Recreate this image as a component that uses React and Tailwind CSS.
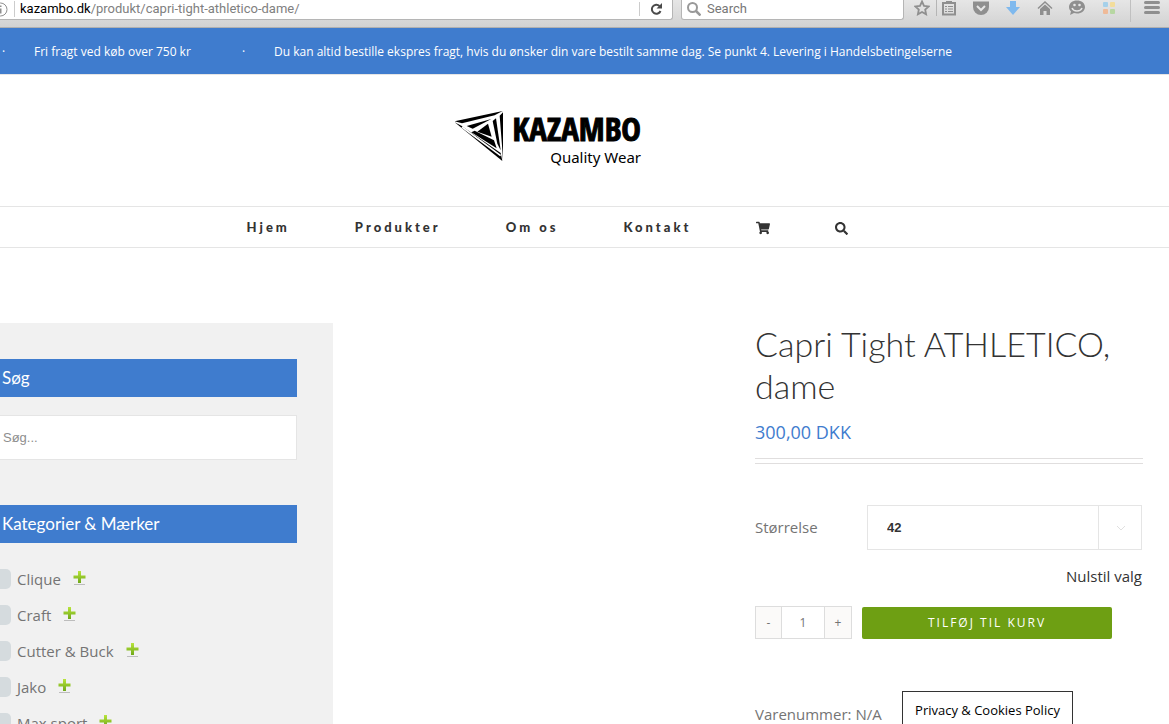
import React, { useState } from 'react';
import { FaShoppingCart, FaSearch } from 'react-icons/fa';

const categories = ['Clique', 'Craft', 'Cutter & Buck', 'Jako', 'Max sport'];
const navLinks = ['Hjem', 'Produkter', 'Om os', 'Kontakt'];

const App = () => {
  const [quantity, setQuantity] = useState(1);
  const [size, setSize] = useState('42');

  return (
    <div className="h-screen overflow-hidden bg-white font-['Open_Sans',sans-serif] text-[#747474]">
      <BrowserBar />

      {/* Shipping notice */}
      <div className="flex h-[47px] items-center overflow-hidden whitespace-nowrap border-b border-[#e5e5e5] bg-[#3f7cce] pl-[2px] pt-[2px] text-[12px] text-white">
        <span className="w-8">·</span>
        <span className="w-[208px]">Fri fragt ved køb over 750 kr</span>
        <span className="w-8">·</span>
        <span>Du kan altid bestille ekspres fragt, hvis du ønsker din vare bestilt samme dag. Se punkt 4. Levering i Handelsbetingelserne</span>
      </div>

      <header>
        <div className="flex h-[131px] justify-center pr-[74px] pt-9">
          <Logo />
        </div>
        <nav className="flex h-[42px] items-center justify-center gap-[65px] border-y border-[#e5e5e5] pr-[74px] pt-[2px] font-['Lato',sans-serif] text-[13px] font-black tracking-[3px] text-[#333333]">
          {navLinks.map(link => (
            <a key={link} href="#">{link}</a>
          ))}
          <a href="#" aria-label="Kurv"><FaShoppingCart className="size-[14px]" /></a>
          <a href="#" aria-label="Søg"><FaSearch className="size-[13px]" /></a>
        </nav>
      </header>

      <main className="grid grid-cols-[333px_1fr_388px] pr-[26px] pt-[75px]">
        <aside className="bg-[#f1f1f1] pb-9 pr-9 pt-9">
          <SidebarTitle>Søg</SidebarTitle>
          <input
            type="text"
            aria-label="Søg"
            placeholder="Søg..."
            className="mb-[45px] mt-[18px] block h-[45px] w-full border border-l-0 border-[#e5e5e5] bg-white pl-[3px] font-['Liberation_Sans',sans-serif] text-[13px] placeholder:text-[#8e8e8e] focus:outline-none"
          />
          <SidebarTitle>Kategorier &amp; Mærker</SidebarTitle>
          <ul className="mt-[18px]">
            {categories.map(name => (
              <CategoryRow key={name} name={name} />
            ))}
          </ul>
        </aside>

        {/* Product */}
        <section className="col-start-3">
          <h1 className="font-['Lato',sans-serif] text-[34px] font-light leading-[42px] text-[#333333]">
            Capri Tight ATHLETICO, dame
          </h1>
          <p className="mt-[11px] text-[18px] leading-7 text-[#3f7cce]">300,00 DKK</p>
          <div className="mt-3 h-[6px] border-y border-[#e0dede]" />

          <div className="mt-[41px] flex items-center pr-px">
            <label htmlFor="size" className="w-28 text-[15px]">Størrelse</label>
            <div className="relative flex-1">
              <select
                id="size"
                value={size}
                onChange={(e) => setSize(e.target.value)}
                className="block h-[45px] w-full appearance-none border border-[#e5e5e5] bg-white pl-[19px] font-['Liberation_Sans',sans-serif] text-[13px] font-bold text-[#333333] focus:outline-none"
              >
                <option>42</option>
                <option>44</option>
                <option>46</option>
              </select>
              <span className="pointer-events-none absolute inset-y-0 right-0 flex w-11 items-center justify-center border-l border-[#e5e5e5]">
                <svg width="10" height="6" viewBox="0 0 10 6" fill="none" stroke="#e0e0e0">
                  <path d="M1 1l4 4 4-4" />
                </svg>
              </span>
            </div>
          </div>
          <div className="mt-[14px] pr-px text-right text-[15px] leading-6 text-[#333333]">
            <a href="#">Nulstil valg</a>
          </div>

          <div className="mt-[18px] flex items-center gap-[10px]">
            <div className="flex h-[33px] border border-[#dddddd] text-[12px]">
              <button aria-label="Færre" onClick={() => setQuantity(Math.max(1, quantity - 1))} className="w-[25px] bg-[#fbfaf9]">-</button>
              <input
                type="text"
                aria-label="Antal"
                value={quantity}
                onChange={(e) => setQuantity(Number(e.target.value) || 1)}
                className="w-11 border-x border-[#dddddd] text-center focus:outline-none"
              />
              <button aria-label="Flere" onClick={() => setQuantity(quantity + 1)} className="w-[26px] bg-[#fbfaf9]">+</button>
            </div>
            <button className="h-8 w-[250px] rounded-[2px] bg-[#6e9f13] text-[12px] tracking-[2px] text-white">
              TILFØJ TIL KURV
            </button>
          </div>

          <p className="mt-[63px] text-[15px] leading-6">Varenummer: N/A</p>
        </section>
      </main>

      <a href="#" className="fixed bottom-0 right-24 flex h-[33px] w-[171px] items-center justify-center whitespace-nowrap border border-b-0 border-[#333333] bg-white pt-[5px] text-[13px] text-black">
        Privacy &amp; Cookies Policy
      </a>
    </div>
  );
};

const SidebarTitle = ({ children }) => (
  <h2 className="flex h-[38px] items-center bg-[#3f7cce] pl-[2px] font-['Lato',sans-serif] text-[17px] text-white">{children}</h2>
);

const CategoryRow = ({ name }) => (
  <li className="flex h-9 items-center">
    <label className="flex items-center gap-[6px] text-[15px]">
      <input type="checkbox" className="-ml-[9px] size-5 appearance-none rounded-[5px] bg-[#d5dbde] checked:bg-[#3f7cce]" />
      {name}
    </label>
    <button aria-label={`Vis ${name}`} className="ml-3 pb-1">
      <svg width="13" height="15" viewBox="0 0 13 15">
        <defs>
          <linearGradient id="plus" x1="0" y1="0" x2="0" y2="1">
            <stop offset="0" stopColor="#b9e53c" />
            <stop offset="1" stopColor="#6fa818" />
          </linearGradient>
        </defs>
        <path d="M5 1h3v4.500h4.500v3H8V13H5V8.500H.5v-3H5z" fill="url(#plus)" />
        <path d="M1 14.500h11" stroke="#bdbdbd" />
      </svg>
    </button>
  </li>
);

const Logo = () => (
  <a href="#" aria-label="Kazambo Quality Wear" className="flex gap-2 text-black">
    <svg width="50" height="52" viewBox="12 18 150 156">
      <path d="M14 49L158 18L134 31L36 55z" />
      <path d="M50 63L124 42L68 71z" />
      <path d="M14 52L34 62L152 144L157 168z" />
      <path d="M36 66L152 152" stroke="#fff" strokeWidth="5" />
      <path d="M114 56L125 95L82 80z" />
      <path d="M64 82L74 77L132 106L140 130z" />
      <path d="M128 48L138 40L152 136L142 116z" />
      <path d="M149 32L159 22V166L157 134z" />
    </svg>
    <span className="flex w-[129px] flex-col items-end">
      <span className="font-['Open_Sans_Condensed','Roboto_Condensed','Liberation_Sans_Narrow',sans-serif] text-[33px] font-bold leading-9 [-webkit-text-stroke:1px_#000]">KAZAMBO</span>
      <span className="font-['Noto_Sans',sans-serif] text-[15px] leading-5">Quality Wear</span>
    </span>
  </a>
);

const BrowserBar = () => (
  <div className="flex h-7 items-start overflow-hidden border-b border-[#b0b0b0] bg-linear-to-b from-[#e6e6e6] to-[#d2d2d2] font-['Roboto',sans-serif] text-[13px] text-[#8f8f8f]">
    <div className="flex h-5 flex-1 items-center rounded-br-[3px] border-b border-r border-[#b5b5b5] bg-white pb-px">
      <svg className="-ml-[7px]" width="15" height="15" viewBox="0 0 15 15" fill="none" stroke="#8f8f8f">
        <circle cx="7.500" cy="7.500" r="6.500" />
        <path d="M7.500 6.500v5M7.500 3.500v1.500" strokeWidth="2" />
      </svg>
      <span className="ml-[6px] h-4 w-px bg-[#cccccc]" />
      <input type="text" aria-label="Adresse" className="sr-only" defaultValue="kazambo.dk/produkt/capri-tight-athletico-dame/" />
      <span className="ml-[5px] flex-1 text-[#808080]"><span className="text-black">kazambo.dk</span>/produkt/capri-tight-athletico-dame/</span>
      <button aria-label="Genindlæs" className="flex w-[33px] justify-center border-l border-[#cccccc]">
        <svg width="13" height="14" viewBox="0 0 13 14" fill="none" stroke="#4a4a4a" strokeWidth="2">
          <path d="M9.500 4A4.500 4.500 0 1 0 10.500 9" />
          <path d="M12 1v5.500H6.500z" fill="#4a4a4a" stroke="none" />
        </svg>
      </button>
    </div>
    <div className="ml-2 flex h-5 w-[223px] items-center gap-[6px] rounded-b-[3px] border border-t-0 border-[#b5b5b5] bg-white pb-px pl-[5px]">
      <svg width="14" height="14" viewBox="0 0 14 14" fill="none" stroke="#999">
        <circle cx="5.500" cy="5.500" r="4.500" strokeWidth="2" />
        <path d="M9 9l4.500 4.500" strokeWidth="2.500" />
      </svg>
      <input type="text" aria-label="Search" placeholder="Search" className="w-40 placeholder:text-[#777777] focus:outline-none" />
    </div>

    {/* Toolbar icons */}
    <div className="ml-[2px] flex h-4 w-[263px] items-center">
      <ToolButton label="Bogmærke">
        <path d="M8 1.500l2 4.300 4.700.6-3.500 3.200.9 4.700L8 12l-4.100 2.300.9-4.700L1.300 6.400 6 5.800z" fill="none" stroke="#8f8f8f" strokeWidth="1.800" />
      </ToolButton>
      <span className="-ml-[2px] h-4 w-px bg-[#b5b5b5]" />
      <span className="-ml-1 flex">
        <ToolButton label="Liste">
          <path d="M2 3h12v11.500H2z" fill="none" stroke="#8f8f8f" strokeWidth="2" />
          <path d="M5 1h6v2H5z" fill="#8f8f8f" />
          <path d="M4 6.500h2M7 6.500h5M4 9h2M7 9h5M4 11.500h2M7 11.500h5" stroke="#8f8f8f" strokeWidth="1.200" />
        </ToolButton>
        <ToolButton label="Pocket">
          <path d="M0 1.500h16V7a8 8 0 0 1-16 0z" fill="#8f8f8f" />
          <path d="M4 6l4 4 4-4" fill="none" stroke="#e6e6e6" strokeWidth="2" />
        </ToolButton>
        <ToolButton label="Hent">
          <path d="M5 1h6v6h4l-7 8-7-8h4z" fill="#7fb9ee" />
        </ToolButton>
        <ToolButton label="Hjem">
          <path d="M1 8.500L8 2l7 6.500" fill="none" stroke="#8f8f8f" strokeWidth="1.500" />
          <path d="M3 9l5-4.500L13 9v6H9.500v-4h-3v4H3z" fill="#8f8f8f" />
        </ToolButton>
        <ToolButton label="Chat">
          <path d="M8 .5c4.500 0 8 2.700 8 6.500s-3.500 6.500-8 6.500c-1 0-2-.1-3-.4L1 15l1-3.500C.8 10.300 0 8.800 0 7 0 3.200 3.500.5 8 .5z" fill="#8f8f8f" />
          <circle cx="5.500" cy="5" r="1.300" fill="#e6e6e6" />
          <circle cx="10.500" cy="5" r="1.300" fill="#e6e6e6" />
          <path d="M3 8c1.500 4 8.500 4 10 0" fill="none" stroke="#e6e6e6" strokeWidth="1.500" />
        </ToolButton>
        <ToolButton label="Apps">
          <rect x="2" y="2" width="5" height="5" rx="1" fill="#a5d0ea" />
          <rect x="9" y="2" width="5" height="5" rx="1" fill="#f3dd9b" />
          <rect x="2" y="9" width="5" height="5" rx="1" fill="#efba98" />
          <rect x="9" y="9" width="5" height="5" rx="1" fill="#b7d7a2" />
        </ToolButton>
      </span>
      <span className="mx-[5px] h-7 w-px bg-[#c0c0c0]" />
      <ToolButton label="Menu">
        <path d="M1.500 2.500h13M1.500 7.500h13M1.500 12.500h13" stroke="#8f8f8f" strokeWidth="3" strokeLinecap="round" />
      </ToolButton>
    </div>
  </div>
);

const ToolButton = ({ label, children }) => (
  <button aria-label={label} className="flex w-8 shrink-0 justify-center">
    <svg width="16" height="16" viewBox="0 0 16 16">{children}</svg>
  </button>
);

export default App;
